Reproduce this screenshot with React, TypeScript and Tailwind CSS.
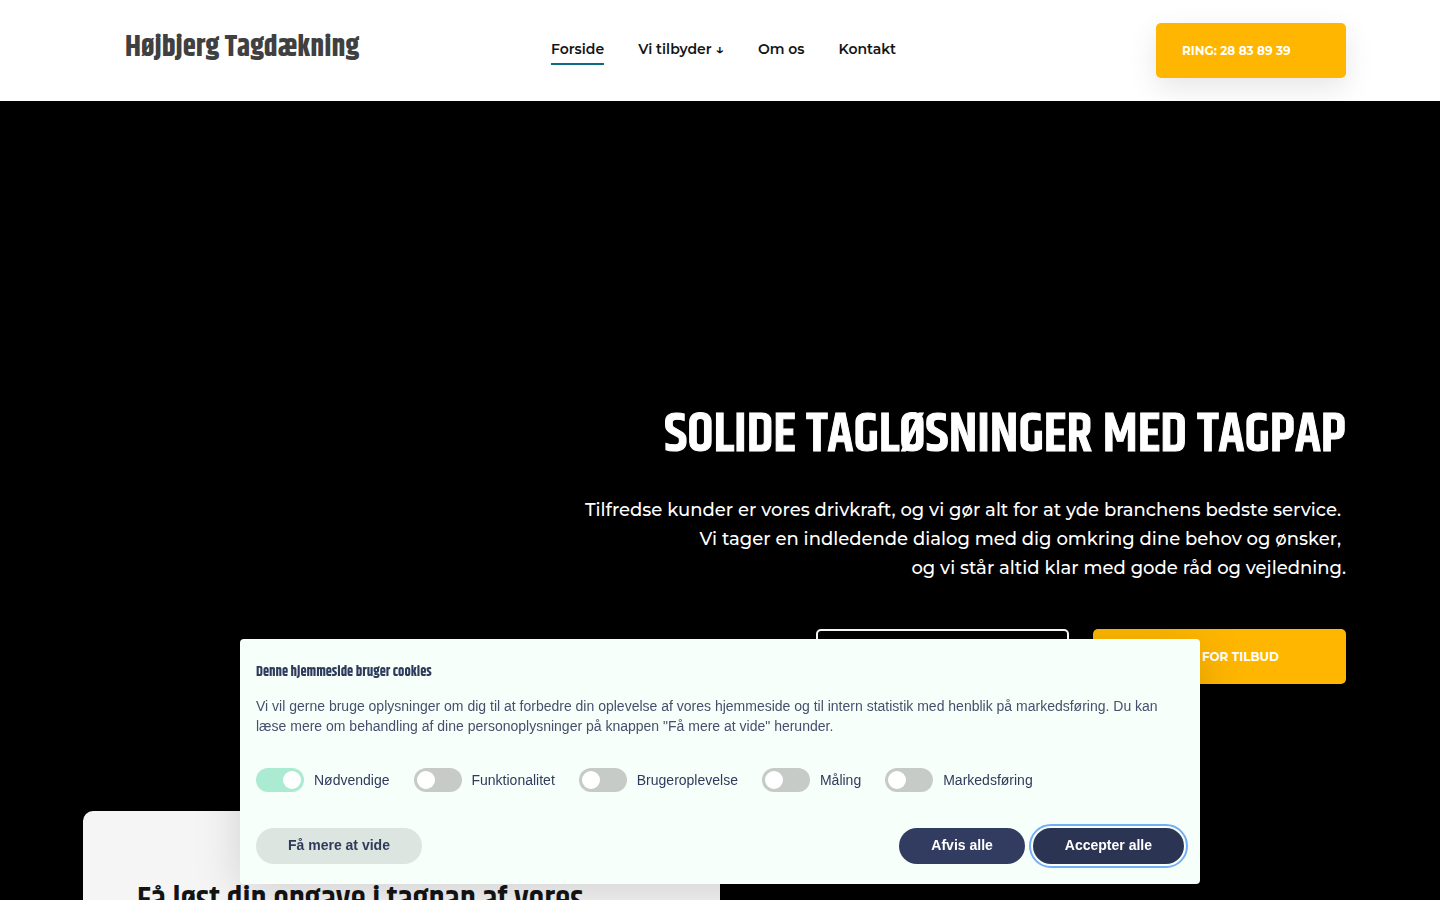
import { useState } from "react";

const display = "font-['Khand','Roboto_Condensed','Liberation_Sans_Narrow',sans-serif]";
const body = "font-['Montserrat','Inter',sans-serif]";

const navItems = [
  { label: "Forside", active: true },
  { label: "Vi tilbyder ↓", active: false },
  { label: "Om os", active: false },
  { label: "Kontakt", active: false },
];

const categories = [
  { id: "necessary", label: "Nødvendige", locked: true },
  { id: "functional", label: "Funktionalitet", locked: false },
  { id: "experience", label: "Brugeroplevelse", locked: false },
  { id: "measurement", label: "Måling", locked: false },
  { id: "marketing", label: "Markedsføring", locked: false },
];

function Header() {
  return (
    <header className="grid h-[101px] shrink-0 grid-cols-[1fr_auto_1fr] items-center bg-white px-[94px]">
      <a href="#top" className={`${display} pb-2 pl-[31px] text-[30px] leading-9 font-bold whitespace-nowrap text-[#404040]`}>
        Højbjerg Tagdækning
      </a>
      <nav className="flex gap-[34px] pl-[7px]">
        {navItems.map((item) => (
          <a
            key={item.label}
            href="#nav"
            className={`border-b-2 pb-[2px] text-sm leading-6 font-semibold whitespace-nowrap text-[#141414] ${item.active ? "border-[#0b6b86]" : "border-transparent"}`}
          >
            {item.label}
          </a>
        ))}
      </nav>
      <a
        href="tel:28838939"
        className="flex h-[55px] w-[190px] items-center justify-self-end rounded-[5px] bg-[#ffb600] px-[26px] text-xs font-bold whitespace-nowrap text-white shadow-[0_10px_30px_rgba(0,0,0,0.1)]"
      >
        RING: 28 83 89 39
      </a>
    </header>
  );
}

function Hero() {
  return (
    <section className="flex h-[710px] shrink-0 flex-col items-end px-[94px] pt-[299px] text-right text-white">
      <h1 className={`${display} text-[55px] leading-[70px] font-semibold whitespace-nowrap [-webkit-text-stroke:1px_currentColor]`}>
        SOLIDE TAGLØSNINGER MED TAGPAP
      </h1>
      <p className="mt-[26px] text-lg leading-[29px] font-medium">
        <span className="block pr-[5px]">Tilfredse kunder er vores drivkraft, og vi gør alt for at yde branchens bedste service.</span>
        <span className="block pr-[5px]">Vi tager en indledende dialog med dig omkring dine behov og ønsker,</span>
        <span className="block">og vi står altid klar med gode råd og vejledning.</span>
      </p>
      <div className="mt-[46px] flex gap-6 text-xs font-bold">
        <a href="#work" aria-label="Vi tilbyder" className="h-[55px] w-[253px] rounded-[5px] border-2 border-white" />
        <a href="#quote" className="flex h-[55px] w-[253px] items-center justify-end rounded-[5px] bg-[#ffb600] pr-[67px]">
          FOR TILBUD
        </a>
      </div>
    </section>
  );
}

function CookieDialog() {
  const [enabled, setEnabled] = useState<Record<string, boolean>>({ necessary: true });
  return (
    <div
      role="dialog"
      aria-labelledby="cookie-title"
      className="fixed inset-x-0 bottom-4 mx-auto w-2/3 rounded-[4px] bg-[#f7fffa] px-4 pt-[23px] pb-5 font-['Liberation_Sans',sans-serif] text-[#2f3b5c] shadow-[0_8px_48px_rgba(0,0,0,0.15)]"
    >
      <h2 id="cookie-title" className={`${display} text-sm leading-5 font-bold`}>
        Denne hjemmeside bruger cookies
      </h2>
      <p className="mt-[14px] text-sm leading-5 text-[#46506c]">
        Vi vil gerne bruge oplysninger om dig til at forbedre din oplevelse af vores hjemmeside og til intern statistik med henblik på markedsføring. Du kan læse mere om behandling af dine personoplysninger på knappen "Få mere at vide" herunder.
      </p>
      <div className="mt-8 flex gap-6">
        {categories.map((c) => (
          <label key={c.id} htmlFor={c.id} className="flex items-center gap-[10px] text-sm leading-6 whitespace-nowrap">
            <input
              id={c.id}
              type="checkbox"
              role="switch"
              disabled={c.locked}
              checked={!!enabled[c.id]}
              onChange={(e) => setEnabled({ ...enabled, [c.id]: e.target.checked })}
              className="flex h-6 w-12 appearance-none items-center rounded-full bg-[#c6cbc7] px-[3px] before:size-[18px] before:rounded-full before:bg-white checked:justify-end checked:bg-[#abebd2]"
            />
            {c.label}
          </label>
        ))}
      </div>
      <div className="mt-9 flex gap-2 text-sm leading-5 font-bold">
        <button type="button" className="mr-auto h-9 rounded-full bg-[#dde5e0] px-8 pb-[2px]">Få mere at vide</button>
        <button type="button" className="h-9 rounded-full bg-[#323c60] px-8 pb-[2px] text-white">Afvis alle</button>
        <button type="button" className="h-9 rounded-full bg-[#2b3553] px-8 pb-[2px] text-white outline-2 outline-offset-2 outline-[#74aef5]">
          Accepter alle
        </button>
      </div>
    </div>
  );
}

export default function App() {
  return (
    <div id="top" className={`${body} flex h-screen flex-col overflow-hidden bg-black`}>
      <Header />
      <Hero />
      <section className="w-1/2 shrink-0 pl-[83px]">
        <div className="rounded-tl-[10px] bg-[#f5f5f5] px-[54px] pt-[70px] pb-16">
          <h2 className={`${display} text-[35px] leading-10 font-semibold whitespace-nowrap text-[#141414]`}>
            Få løst din opgave i tagpap af vores
          </h2>
        </div>
      </section>
      <CookieDialog />
    </div>
  );
}
